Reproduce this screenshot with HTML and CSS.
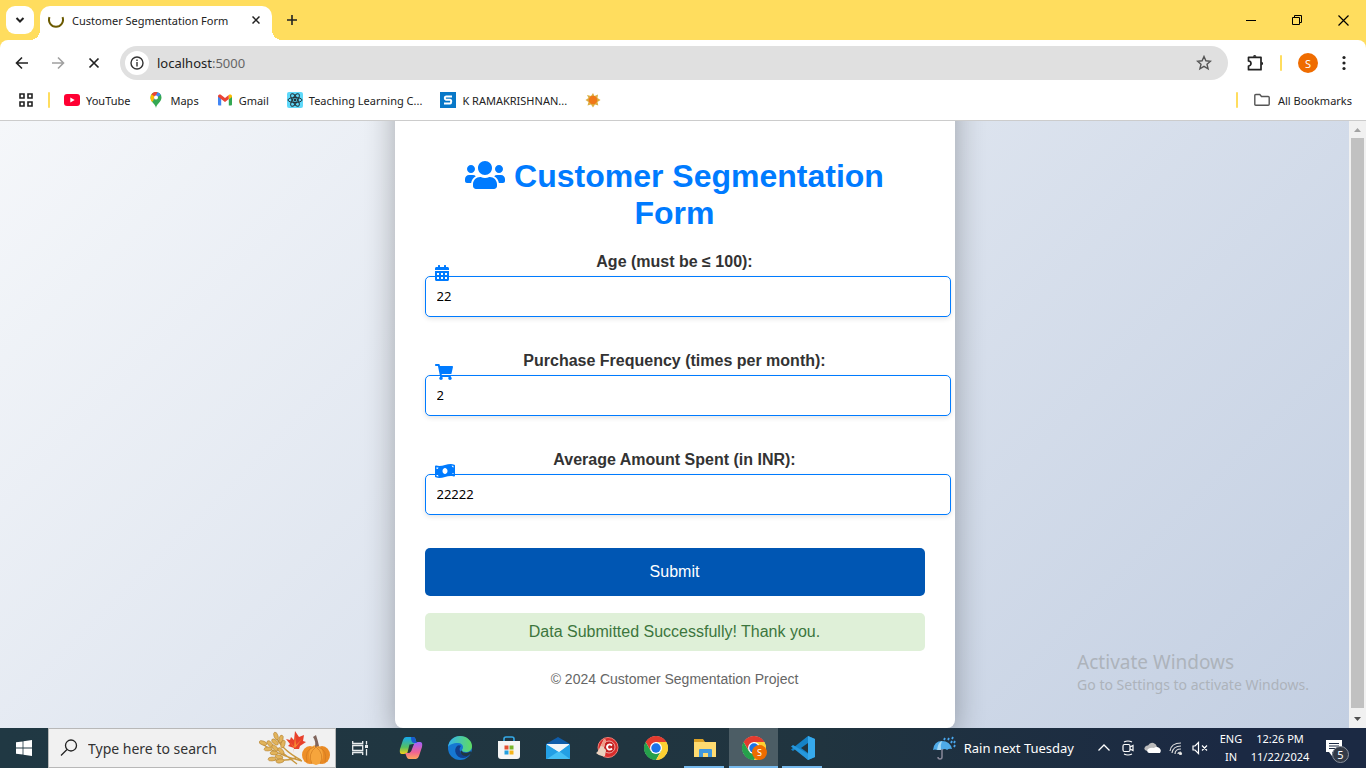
FILE: index.html
```html
<!DOCTYPE html>
<html lang="en">
<head>
<meta charset="utf-8">
<title>Customer Segmentation Form</title>
<link rel="stylesheet" href="styles.css">
</head>
<body>
<svg class="defs" width="0" height="0" aria-hidden="true">
  <symbol id="chrome" viewBox="0 0 48 48">
    <circle cx="24" cy="24" r="23.500" fill="#fff"/>
    <path fill="#e33b2e" d="M24 12h20.800A24 24 0 0 0 3.200 12l10.400 18z"/>
    <path fill="#26a04b" d="M34.400 30L24 48A24 24 0 0 1 3.200 12l10.400 18z"/>
    <path fill="#fdd032" d="M24 12h20.800A24 24 0 0 1 24 48l10.400-18z"/>
    <circle cx="24" cy="24" r="12" fill="#fff"/>
    <circle cx="24" cy="24" r="9.500" fill="#1a73e8"/>
  </symbol>
</svg>
<div class="screen">
  <header class="tabs">
    <button class="tab-search" aria-label="Search tabs"><svg width="10" height="8" viewBox="0 0 10 8" fill="none" stroke="#222" stroke-width="2"><path d="M1.500 2L5 5.500 8.500 2"/></svg></button>
    <div class="tab">
      <svg width="16" height="16" viewBox="0 0 16 16" fill="none" stroke="#6b5a00" stroke-width="2"><path d="M1.500 5.200A7 7 0 1 0 14.500 5.200"/></svg>
      <span class="tab-title">Customer Segmentation Form</span>
      <button class="plain" aria-label="Close tab"><svg width="8" height="8" viewBox="0 0 8 8" stroke="#222" stroke-width="1.500"><path d="M.5.5l7 7M7.500.5l-7 7"/></svg></button>
    </div>
    <button class="plain new-tab" aria-label="New tab"><svg width="10" height="10" viewBox="0 0 10 10" stroke="#222" stroke-width="1.600"><path d="M5 0v10M0 5h10"/></svg></button>
    <div class="window-buttons">
      <button class="plain" aria-label="Minimize"><svg width="10" height="10" viewBox="0 0 10 10" stroke="#000"><path d="M0 5.500h10"/></svg></button>
      <button class="plain" aria-label="Restore"><svg width="10" height="10" viewBox="0 0 10 10" fill="none" stroke="#000"><path d="M.5 2.500h7v7h-7zM2.500 2.500v-2h7v7h-2"/></svg></button>
      <button class="plain" aria-label="Close"><svg width="11" height="11" viewBox="0 0 11 11" stroke="#000" stroke-width="1.200"><path d="M.5.5l10 10M10.500.5l-10 10"/></svg></button>
    </div>
  </header>

  <nav class="toolbar">
    <button class="plain" aria-label="Back"><svg width="14" height="14" viewBox="0 0 14 14" fill="none" stroke="#222" stroke-width="1.600"><path d="M13 7H1.500M7 1.500L1.500 7 7 12.500"/></svg></button>
    <button class="plain" aria-label="Forward"><svg width="14" height="14" viewBox="0 0 14 14" fill="none" stroke="#a0a0a0" stroke-width="1.600"><path d="M1 7h11.500M7 1.500L12.500 7 7 12.500"/></svg></button>
    <button class="plain" aria-label="Stop"><svg width="12" height="12" viewBox="0 0 12 12" stroke="#222" stroke-width="1.700"><path d="M1.500 1.500l9 9M10.500 1.500l-9 9"/></svg></button>
    <div class="omnibox">
      <button class="site-info" aria-label="Site information"><svg width="14" height="14" viewBox="0 0 14 14" fill="none" stroke="#333" stroke-width="1.400"><circle cx="7" cy="7" r="6"/><path d="M7 6v4.500M7 3.500v1.500"/></svg></button>
      <span class="url">localhost<span>:5000</span></span>
      <button class="plain" aria-label="Bookmark"><svg width="16" height="16" viewBox="0 0 16 16" fill="none" stroke="#555" stroke-width="1.400"><path d="M8 1.500l1.900 4.300 4.600.4-3.500 3.100 1.100 4.600L8 11.400l-4.100 2.500L5 9.300 1.500 6.200l4.600-.4z"/></svg></button>
    </div>
    <div class="tools">
      <button class="plain" aria-label="Extensions"><svg width="18" height="18" viewBox="0 0 18 18" fill="none" stroke="#222" stroke-width="1.700" stroke-linejoin="round"><path d="M2.500 3.300H15v12.400H2.500V12a2.500 2.500 0 0 0 0-5z"/><path d="M7 2.800a1.700 1.700 0 0 1 3.400 0zM15.400 7.800a1.700 1.700 0 0 1 0 3.400z" fill="#222" stroke="none"/></svg></button>
      <i class="rule"></i>
      <button class="plain" aria-label="Profile"><span class="avatar">S</span></button>
      <button class="plain menu" aria-label="Menu"><svg width="4" height="16" viewBox="0 0 4 16" fill="#222"><circle cx="2" cy="2.500" r="1.600"/><circle cx="2" cy="8" r="1.600"/><circle cx="2" cy="13.500" r="1.600"/></svg></button>
    </div>
  </nav>

  <nav class="bookmarks">
    <button class="plain" aria-label="Tab groups"><svg width="16" height="16" viewBox="0 0 16 16" fill="none" stroke="#222" stroke-width="1.600"><path d="M2 2h4v4H2zM10 2h4v4h-4zM2 10h4v4H2zM10 10h4v4h-4z"/></svg></button>
    <i class="rule"></i>
    <a href="#" class="mark"><svg width="16" height="16" viewBox="0 0 16 16"><rect y="2" width="16" height="12" rx="3" fill="#f03"/><path d="M6.300 5.500v5L10.700 8z" fill="#fff"/></svg>YouTube</a>
    <a href="#" class="mark"><svg width="16" height="16" viewBox="0 0 16 16"><path d="M8 16c.5-4 5.500-6 5.500-10.500A5.500 5.500 0 0 0 2.500 5.500C2.500 10 7.500 12 8 16z" fill="#34a853"/><path d="M2.500 5.500A5.500 5.500 0 0 1 4 1.800L8 5.500l-4 4.600C3.100 8.700 2.500 7.400 2.500 5.500z" fill="#fbbc04"/><path d="M3.600 2.200L8 5.500 9.600.2a5.500 5.500 0 0 0-6 2z" fill="#ea4335"/><path d="M9.600.2L5 8.500 12.700 2.700A5.500 5.500 0 0 0 9.600.2z" fill="#4285f4"/><circle cx="8" cy="5.500" r="2" fill="#fff"/></svg>Maps</a>
    <a href="#" class="mark"><svg width="16" height="16" viewBox="0 0 16 16"><path d="M1 4v8.500q0 1 1 1h2.200V6z" fill="#4285f4"/><path d="M15 4v8.500q0 1-1 1h-2.200V6z" fill="#34a853"/><path d="M1 4.500C1 2.500 3 2 4.200 3L8 5.900 11.800 3v4L8 10 1 4.800z" fill="#ea4335"/><path d="M11.800 3C13 2 15 2.500 15 4.500v.6l-3.200 2.300z" fill="#fbbc04"/></svg>Gmail</a>
    <a href="#" class="mark"><svg width="16" height="16" viewBox="0 0 16 16"><rect width="16" height="16" rx="2" fill="#5fd9fa"/><g fill="none" stroke="#243238"><ellipse cx="8" cy="8" rx="7" ry="2.600"/><ellipse cx="8" cy="8" rx="7" ry="2.600" transform="rotate(60 8 8)"/><ellipse cx="8" cy="8" rx="7" ry="2.600" transform="rotate(120 8 8)"/></g><circle cx="8" cy="8" r="1.400" fill="#243238"/></svg>Teaching Learning C...</a>
    <a href="#" class="mark"><svg width="16" height="16" viewBox="0 0 16 16"><rect width="16" height="16" fill="#0878c8"/><path d="M12 4.500H6Q4.800 4.500 4.800 6T6 7.800h4q1.200 0 1.200 1.800T10 11.500H4" fill="none" stroke="#fff" stroke-width="2"/></svg>K RAMAKRISHNAN...</a>
    <a href="#" class="mark" aria-label="Sun bookmark"><svg width="16" height="16" viewBox="0 0 16 16"><path d="M8 1l1.500 3L13 2.500 12.500 6 15.500 8 12.500 10l.8 3.500L10 12.500 8 15.500 6 12.500 2.500 13.500 3.500 10 .5 8l3-2L2 3l4 1z" fill="#dcae42"/><circle cx="8" cy="8" r="4.300" fill="#f07818"/></svg></a>
    <div class="all-marks">
      <i class="rule"></i>
      <a href="#" class="mark"><svg width="16" height="14" viewBox="0 0 16 14" fill="none" stroke="#555" stroke-width="1.400"><path d="M.8 2.500q0-1 1-1h4l1.700 2h6.700q1 0 1 1v6.700q0 1-1 1H1.800q-1 0-1-1z"/></svg>All Bookmarks</a>
    </div>
  </nav>

  <div class="viewport">
    <main class="page">
      <section class="card">
        <h1><svg width="40" height="32" viewBox="0 0 640 512" fill="currentColor"><path d="M96 224c35.300 0 64-28.700 64-64s-28.700-64-64-64-64 28.700-64 64 28.700 64 64 64zm448 0c35.300 0 64-28.700 64-64s-28.700-64-64-64-64 28.700-64 64 28.700 64 64 64zm32 32h-64c-17.600 0-33.500 7.100-45.100 18.600 40.300 22.100 68.900 62 75.100 109.400h66c17.700 0 32-14.300 32-32v-32c0-35.300-28.700-64-64-64zm-256 0c61.900 0 112-50.100 112-112S381.900 32 320 32 208 82.100 208 144s50.100 112 112 112zm76.800 32h-8.300c-20.800 10-43.900 16-68.500 16s-47.600-6-68.500-16h-8.300C179.600 288 128 339.600 128 403.200V432c0 26.500 21.500 48 48 48h288c26.500 0 48-21.500 48-48v-28.800c0-63.600-51.600-115.200-115.200-115.200zm-223.700-13.400C161.500 263.100 145.600 256 128 256H64c-35.300 0-64 28.700-64 64v32c0 17.700 14.300 32 32 32h65.900c6.300-47.400 34.900-87.300 75.200-109.400z"/></svg> Customer Segmentation Form</h1>
        <form>
          <div class="field">
            <label for="age">Age (must be ≤ 100):</label>
            <div class="control">
              <svg width="14" height="16" viewBox="0 0 448 512" fill="currentColor"><path fill-rule="evenodd" d="M0 464c0 26.500 21.500 48 48 48h352c26.500 0 48-21.500 48-48V192H0zM64 256h64v64H64zM192 256h64v64h-64zM320 256h64v64h-64zM64 384h64v64H64zM192 384h64v64h-64zM320 384h64v64h-64zM400 64h-48V16c0-8.800-7.200-16-16-16h-32c-8.800 0-16 7.200-16 16v48H160V16c0-8.800-7.200-16-16-16h-32c-8.800 0-16 7.200-16 16v48H48C21.500 64 0 85.500 0 112v48h448v-48c0-26.500-21.500-48-48-48z"/></svg>
              <input id="age" type="text" value="22">
            </div>
          </div>
          <div class="field">
            <label for="frequency">Purchase Frequency (times per month):</label>
            <div class="control">
              <svg width="18" height="16" viewBox="0 0 576 512" fill="currentColor"><path d="M528.120 301.319l47.273-208C578.806 78.301 567.391 64 551.990 64H159.208l-9.166-44.810C147.758 8.021 137.930 0 126.529 0H24C10.745 0 0 10.745 0 24v16c0 13.255 10.745 24 24 24h69.883l70.248 343.435C147.325 417.100 136 435.222 136 456c0 30.928 25.072 56 56 56s56-25.072 56-56c0-15.674-6.447-29.835-16.824-40h209.647C430.447 426.165 424 440.326 424 456c0 30.928 25.072 56 56 56s56-25.072 56-56c0-22.172-12.888-41.332-31.579-50.405l5.517-24.276c3.413-15.018-8.002-29.319-23.403-29.319H218.117l-6.545-32h293.145c11.206 0 20.920-7.754 23.403-18.681z"/></svg>
              <input id="frequency" type="text" value="2">
            </div>
          </div>
          <div class="field">
            <label for="amount">Average Amount Spent (in INR):</label>
            <div class="control">
              <svg width="20" height="16" viewBox="0 0 640 512" fill="currentColor"><path d="M621.160 54.460C582.370 38.190 543.550 32 504.750 32c-123.170-.01-246.330 62.340-369.500 62.340-30.890 0-61.760-3.920-92.650-13.720-3.470-1.100-6.950-1.620-10.350-1.620C15.040 79 0 92.320 0 110.810v317.260c0 12.630 7.230 24.600 18.840 29.460C57.630 473.810 96.450 480 135.250 480c123.170 0 246.340-62.350 369.510-62.350 30.890 0 61.760 3.920 92.650 13.720 3.470 1.100 6.950 1.620 10.350 1.620 17.210 0 32.250-13.320 32.250-31.810V83.930c-.01-12.640-7.240-24.600-18.850-29.470zM48 132.220c20.120 5.040 41.120 7.570 62.720 8.930C104.840 170.540 79 192.690 48 192.690v-60.470zm0 285v-47.780c34.370 0 62.180 27.270 63.710 61.400-22.530-1.810-43.590-6.310-63.710-13.620zM320 352c-44.190 0-80-42.990-80-96 0-53.020 35.820-96 80-96s80 42.980 80 96c0 53.030-35.830 96-80 96zm272 27.780c-17.520-4.390-35.710-6.850-54.320-8.440 5.870-26.080 27.500-45.880 54.320-49.280v57.720zm0-236.110c-30.890-3.910-54.860-29.700-55.810-61.550 19.540 2.170 38.090 6.230 55.810 12.660v48.890z"/></svg>
              <input id="amount" type="text" value="22222">
            </div>
          </div>
          <button class="submit" type="button">Submit</button>
        </form>
        <p class="notice">Data Submitted Successfully! Thank you.</p>
        <footer>© 2024 Customer Segmentation Project</footer>
      </section>
      <aside class="watermark"><strong>Activate Windows</strong><span>Go to Settings to activate Windows.</span></aside>
    </main>
    <div class="scrollbar">
      <svg width="17" height="17" viewBox="0 0 17 17" fill="#a3a3a3"><path d="M5 11h7L8.500 7z"/></svg>
      <i></i>
      <svg width="17" height="17" viewBox="0 0 17 17" fill="#505050"><path d="M5 6h7l-3.500 4z"/></svg>
    </div>
  </div>

  <footer class="taskbar">
    <button class="plain task-wide" aria-label="Start"><svg width="16" height="16" viewBox="0 0 16 16" fill="#fff"><path d="M0 2.300L6.600 1.400v6.200H0zM7.400 1.200L16 0v7.600H7.400zM0 8.400h6.600v6.200L0 13.700zM7.400 8.400H16V16l-8.600-1.200z"/></svg></button>
    <label class="search" for="search">
      <svg width="18" height="18" viewBox="0 0 18 18" fill="none" stroke="#222" stroke-width="1.300"><circle cx="11" cy="6.500" r="5.500"/><path d="M7 10.500L1 16.500"/></svg>
      <input id="search" type="text" value="Type here to search">
      <svg width="72" height="36" viewBox="0 0 72 36">
        <g fill="none" stroke="#c9983f" stroke-width="1.400"><path d="M16 4q5 15 26 26M1 12q14 12 42 19M12 29q12 3 25-1M20 20l18 14"/></g>
        <g fill="#e2b45c" stroke="#ad7a2a" stroke-width=".5"><ellipse cx="17" cy="6" rx="2" ry="4" transform="rotate(-20 17 6)"/><ellipse cx="22" cy="9" rx="2" ry="4" transform="rotate(15 22 9)"/><ellipse cx="16" cy="12" rx="2" ry="4" transform="rotate(-50 16 12)"/><ellipse cx="24" cy="14" rx="2" ry="4" transform="rotate(15 24 14)"/><ellipse cx="4" cy="13" rx="2" ry="4" transform="rotate(-70 4 13)"/><ellipse cx="11" cy="14" rx="2" ry="4" transform="rotate(-40 11 14)"/><ellipse cx="9" cy="19" rx="2" ry="4" transform="rotate(-95 9 19)"/><ellipse cx="16" cy="18" rx="2" ry="4" transform="rotate(-45 16 18)"/><ellipse cx="15" cy="23" rx="2" ry="4" transform="rotate(-90 15 23)"/><ellipse cx="22" cy="21" rx="2" ry="4" transform="rotate(-40 22 21)"/><ellipse cx="13" cy="29" rx="2" ry="4" transform="rotate(-95 13 29)"/><ellipse cx="20" cy="27" rx="2" ry="4" transform="rotate(-75 20 27)"/><ellipse cx="21" cy="31" rx="2" ry="4" transform="rotate(-100 21 31)"/></g>
        <path d="M34 23l1-5-6-2 2-2-4-5 4 1 1-3 3 3 1-9 4 6 5-2-1 6 3 1-6 4-1 3-5 0z" fill="#e8402c"/><path d="M35 18l1-12 1 9 6-6-7 9-5-6z" fill="#f98b32"/>
        <ellipse cx="51" cy="25" rx="8" ry="9" fill="#ee8f28"/><ellipse cx="63" cy="25" rx="8" ry="9" fill="#e98a24"/><ellipse cx="57" cy="25" rx="7" ry="10" fill="#f6a53c"/><g fill="none" stroke="#cf7a20" stroke-width=".7"><path d="M57 17q-9 7-4 17M57 17q9 7 4 17M55 17q-10 3-7 15M59 17q10 3 7 15"/></g><path d="M56 17q1-6-2-10l3-2q2 6 3 11z" fill="#80655c"/>
      </svg>
    </label>
    <button class="plain task-wide" aria-label="Task view"><svg width="16" height="16" viewBox="0 0 16 16" fill="none" stroke="#e8eced" stroke-width="1.300"><path d="M.7 1v2.500h10V1M.7 15v-2.500h10V15M.7 5.500h10v5H.7zM14.500 1v3.500M14.500 9v6.500"/><path d="M13 6.500h3" stroke-width="3"/></svg></button>
    <div class="apps">
      <button class="plain" aria-label="Copilot"><svg width="24" height="24" viewBox="0 0 24 24"><defs><linearGradient id="ca" x2="0" y2="1"><stop stop-color="#16a8ee"/><stop offset=".6" stop-color="#54c060"/><stop offset="1" stop-color="#f5d019"/></linearGradient><linearGradient id="cb" x2="0" y2="1"><stop stop-color="#a060ff"/><stop offset=".6" stop-color="#f06393"/><stop offset="1" stop-color="#ffa65a"/></linearGradient></defs><path d="M7 1h7q2.500 0 3 4l1 3h-4.500Q12 8 11 11l-2 5q-1 2-4 2H3q-3 0-2-5L4 4q1-3 3-3z" fill="url(#ca)"/><path d="M17 23h-7q-2 0-3-4l-1-2h3q3 0 4-4l2-5q1-2 4-2h2q3 0 2 5l-3 9q-1 3-3 3z" fill="url(#cb)"/><path d="M12 1h2q2.500 0 3 4l1 2h-3q-3 0-3-6z" fill="#1859ce"/><path d="M10.500 8.500h3l-3 8h-2z" fill="#20353f"/></svg></button>
      <button class="plain" aria-label="Edge"><svg width="24" height="24" viewBox="0 0 24 24"><defs><linearGradient id="ea"><stop stop-color="#35b4ef"/><stop offset="1" stop-color="#5fdc60"/></linearGradient></defs><circle cx="12" cy="12" r="12" fill="#1678d2"/><path d="M0 11C1 4 6 0 12 0c7 0 12 5 12 10 0 4-3 6-6 6s-4-1-4-2c0-1 1-1 1-3 0-2-2-4-5-4C5 7 1 9 0 11z" fill="url(#ea)"/><path d="M9 10c-4 4-1 12 6 12 3 0 6-2 7-4-4 2-9 1-10-3-1-2 0-4 1-5-1-1-3-1-4 0z" fill="#123f8c"/><path d="M13.500 14.500q1 2.500 5 2.200 2-.2 4-1.500l1.500 2-5.500 3q-6-.5-6-5z" fill="#203743"/></svg></button>
      <button class="plain" aria-label="Store"><svg width="24" height="24" viewBox="0 0 24 24"><path d="M7 7V3q0-2 2-2h6q2 0 2 2v4" fill="none" stroke="#35a9e6" stroke-width="1.600"/><path d="M1 5h22v15q0 3-3 3H4q-3 0-3-3z" fill="#f5f5f5"/><path d="M7.500 9.500h4v4h-4z" fill="#e44f31"/><path d="M12.500 9.500h4v4h-4z" fill="#77b52b"/><path d="M7.500 14.500h4v4h-4z" fill="#229fe0"/><path d="M12.500 14.500h4v4h-4z" fill="#f5b51a"/></svg></button>
      <button class="plain" aria-label="Mail"><svg width="24" height="24" viewBox="0 0 24 24"><path d="M0 8l12-7 12 7v4H0z" fill="#0f5daa"/><path d="M1 8h22v8H1z" fill="#edf4f9"/><path d="M0 8l13 8 11-8v15H0z" fill="#239fe5"/><path d="M1 23l12-8 11 8z" fill="#45bff5"/><path d="M1 8h22l-10 8z" fill="#f1f5f8"/></svg></button>
      <button class="plain" aria-label="CCleaner"><svg width="24" height="24" viewBox="0 0 24 24"><circle cx="13" cy="11.500" r="10" fill="#d92c2b" stroke="#ef7e75"/><circle cx="14" cy="11" r="6" fill="#c4201f" stroke="#f4c9c4" stroke-width=".8"/><path d="M17 9.500q-2-2-4-.5-2 2 0 4 2 1.500 4-.5" fill="none" stroke="#fff" stroke-width="1.800"/><path d="M9 3l2 1-2 8 2 2-1 6q-5 1-9-3 2-1 4-6z" fill="#ead1be"/><path d="M9 3l2 1-2 7-3-1z" fill="#f09a86"/></svg></button>
      <button class="plain" aria-label="Chrome"><svg width="24" height="24"><use href="#chrome"/></svg></button>
      <button class="plain running" aria-label="File Explorer"><svg width="24" height="24" viewBox="0 0 24 24"><path d="M1 3h9l2 3h10v6H1z" fill="#dca125"/><path d="M1 6h22v15H1z" fill="#ffdb70"/><path d="M6 21v-7q0-1 1-1h11q1 0 1 1v7h-4v-4h-5v4z" fill="#4098df"/></svg></button>
      <button class="plain running active" aria-label="Chrome, profile S"><svg width="24" height="24"><use href="#chrome"/></svg><span class="profile-badge">S</span></button>
      <button class="plain running" aria-label="Visual Studio Code"><svg width="24" height="24" viewBox="0 0 24 24"><path d="M17 0l7 3v18l-7 3L5 12.500 2 15 0 13.500 17 0z" fill="#1583c7"/><path d="M17 24L0 10.500 2 9l15 9z" fill="#2698dd"/><path d="M17 0l7 3v18l-7 3z" fill="#36a9ec"/><path d="M17 7v10l-7-5z" fill="#20353f"/></svg></button>
    </div>
    <div class="tray">
      <button class="weather"><svg width="24" height="24" viewBox="0 0 24 24"><path d="M1 14Q2 5 10 5t10 8q-3-1-5 1-2-2-5 0-3-2-5 0-2-1-4 0z" fill="#4eaae8"/><path d="M5 14q1-8 5-9-2 4-1 9z" fill="#a5d9f6"/><path d="M10 13v8q0 2-2 2t-2-2" fill="none" stroke="#889" stroke-width="1.500"/><path d="M13 2l-1 2M17 2l-1 2M21 1l-1 2M20 5l-1 2M23 5l-1 2M23 9l-1 2" stroke="#4aa8ef" stroke-width="1.800"/></svg>Rain next Tuesday</button>
      <button class="plain" aria-label="Show hidden icons"><svg width="12" height="8" viewBox="0 0 12 8" fill="none" stroke="#fff" stroke-width="1.300"><path d="M.5 6.500L6 1l5.500 5.500"/></svg></button>
      <button class="plain" aria-label="Meet now"><svg width="12" height="16" viewBox="0 0 12 16" fill="none" stroke="#fff" stroke-width="1.200"><rect x="1" y="4.500" width="7" height="7" rx="1.500"/><path d="M8 7l3-1.500v5L8 9M2 2q4-2 8 0M2 14q4 2 8 0"/></svg></button>
      <button class="plain" aria-label="OneDrive"><svg width="17" height="12" viewBox="0 0 17 12"><path d="M3 9Q-1 8 1 5q1-2 3-1.500Q6 0 9.500 1q3 1 3.500 4 4 1 3 4z" fill="#bbb"/><path d="M5 11q-3-1-1-4 3-2 6-1 2-2 5 0 3 2 1 5z" fill="#fff"/></svg></button>
      <button class="plain" aria-label="Network"><svg width="14" height="14" viewBox="0 0 14 14" fill="none" stroke="#ddd" stroke-width="1.200"><path d="M1 10Q2 2 12 2M3 12Q4 5 12 5M6 13q0-5 6-5M9 13q0-2 3-2"/><circle cx="11.500" cy="12.500" r="1" fill="#fff"/></svg></button>
      <button class="plain" aria-label="Muted"><svg width="16" height="14" viewBox="0 0 16 14" fill="none" stroke="#fff" stroke-width="1.200"><path d="M1 5h2l3.500-3.500v11L3 9H1zM10 4.500l5 5M15 4.500l-5 5"/></svg></button>
      <button class="stack lang"><span>ENG</span><span>IN</span></button>
      <button class="stack clock"><span>12:26 PM</span><span>11/22/2024</span></button>
      <button class="plain bell" aria-label="Notifications"><svg width="16" height="16" viewBox="0 0 16 16"><path d="M0 0h16v12H6v4l-3-4H0z" fill="#fff"/><path d="M3 3.500h10M3 6h10M3 8.500h10" stroke="#1b2943"/></svg><span class="count">5</span></button>
    </div>
  </footer>
</div>
</body>
</html>
```

FILE: styles.css
```css
* { box-sizing: border-box; }
body { margin: 0; font-family: "Noto Sans", "Open Sans", sans-serif; font-size: 11px; color: #222; }
button { font: inherit; color: inherit; border: 0; padding: 0; background: none; }
a { color: inherit; text-decoration: none; }
svg { flex: none; }
.defs { position: absolute; }
.screen { display: flex; flex-direction: column; height: 100vh; overflow: hidden; background: #ffdd5e; }
.plain { display: flex; align-items: center; justify-content: center; }
.rule { width: 2px; height: 16px; background: #ffdd5e; border-radius: 1px; }

.tabs { display: flex; align-items: center; height: 40px; padding-left: 6px; }
.tab-search { width: 28px; height: 28px; border-radius: 9px; background: #fff; margin-right: 6px; display: flex; align-items: center; justify-content: center; }
.tab { position: relative; display: flex; align-items: center; gap: 8px; width: 232px; height: 34px; align-self: flex-end; padding: 0 12px 6px 8px; background: #fff; border-radius: 10px 10px 0 0; }
.tab::before, .tab::after { content: ""; position: absolute; bottom: 0; width: 10px; height: 10px; }
.tab::before { right: 100%; background: radial-gradient(circle at 0 0, transparent 10px, #fff 10px); }
.tab::after { left: 100%; background: radial-gradient(circle at 100% 0, transparent 10px, #fff 10px); }
.tab-title { flex: 1; white-space: nowrap; }
.new-tab { width: 40px; height: 40px; }
.window-buttons { display: flex; margin-left: auto; }
.window-buttons button { width: 46px; height: 40px; }

.toolbar { display: flex; align-items: center; height: 46px; padding: 0 4px; background: #fff; border-radius: 8px 8px 0 0; }
.toolbar > button { width: 36px; height: 36px; }
.omnibox { flex: 1; display: flex; align-items: center; height: 34px; margin: 0 8px; padding: 0 16px 0 5px; border-radius: 17px; background: #e0e0e0; }
.site-info { width: 24px; height: 24px; border-radius: 50%; background: #fff; display: flex; align-items: center; justify-content: center; }
.url { flex: 1; margin-left: 8px; font-size: 13px; }
.url span { color: #666; }
.tools { display: flex; align-items: center; gap: 16px; padding: 0 16px 0 10px; }
.menu { margin-left: 8px; }
.avatar { display: flex; align-items: center; justify-content: center; width: 20px; height: 20px; border-radius: 50%; background: #ef6c00; color: #fff; }

.bookmarks { display: flex; align-items: center; gap: 14px; height: 35px; padding: 0 14px 6px 18px; background: #fff; border-bottom: 1px solid #ccc; }
.mark { display: flex; align-items: center; gap: 6px; margin-right: 4px; white-space: nowrap; }
.all-marks { display: flex; align-items: center; gap: 16px; margin-left: auto; }
.all-marks .mark { gap: 8px; margin-right: 0; }

.viewport { flex: 1; min-height: 0; display: flex; }
.page { position: relative; flex: 1; display: flex; justify-content: center; overflow: hidden; background: linear-gradient(135deg, #f5f7fa, #c3cfe2); font-family: "Liberation Sans", Arial, sans-serif; font-size: 16px; text-align: center; }
.card { width: 560px; margin-top: -40px; padding: 77px 30px 38px; background: #fff; border-radius: 8px; box-shadow: 0 8px 30px rgba(0, 0, 0, .3); }
h1 { margin: 0 0 21px; font-size: 32px; line-height: 37px; color: #007bff; }
h1 svg { vertical-align: -4px; }
label { color: #333; }
.field { height: 99px; }
.field:last-of-type { height: 97px; }
.field label { display: block; margin-bottom: 5px; font-weight: bold; line-height: 18px; }
.control { position: relative; margin-right: -26px; color: #007bff; }
.control svg { position: absolute; left: 10px; top: -11px; }
.control input { display: block; width: 100%; height: 41px; padding: 0 11px 2px; border: 1px solid #007bff; border-radius: 5px; background: #fff; box-shadow: 0 2px 5px rgba(0, 0, 0, .1); font: 13px "Noto Sans", sans-serif; color: #000; }
.submit { display: block; width: 100%; height: 48px; border-radius: 5px; background: #0056b3; color: #fff; }
.notice { margin: 17px 0 20px; padding: 10px; border-radius: 5px; background: #dff0d8; color: #3c763d; line-height: 18px; }
.card footer { font-size: 14px; line-height: 16px; color: #666; }
.watermark { position: absolute; right: 40px; bottom: 33px; display: flex; flex-direction: column; text-align: left; font-family: "Noto Sans", sans-serif; color: #adb3bb; font-size: 14px; line-height: 20px; }
.watermark strong { font-size: 19px; font-weight: normal; line-height: 26px; }
.scrollbar { display: flex; flex-direction: column; align-items: center; width: 17px; background: #f1f1f1; }
.scrollbar i { flex: 1; width: 13px; margin-bottom: 3px; background: #c1c1c1; }

.taskbar { display: flex; align-items: stretch; height: 40px; background: linear-gradient(90deg, #203843, #20343f 60%, #1b2943 90%); color: #fff; }
.task-wide { width: 48px; }
.search { display: flex; align-items: center; width: 288px; padding: 0 4px 0 11px; border: 1px solid #b8b8b8; background: #f1f1f1; }
.search input { flex: 1; min-width: 0; margin-left: 10px; padding: 0; border: 0; background: none; color: #333; font: 14px "Noto Sans", sans-serif; }
.apps { display: flex; padding-left: 2px; }
.apps button { position: relative; width: 49px; }
.running::after { content: ""; position: absolute; left: 4px; right: 5px; bottom: 0; height: 2px; background: #76b9ed; }
.active { background: #4c5d65; }
.active::after { left: 0; right: 0; }
.profile-badge { position: absolute; left: 23px; top: 17px; width: 15px; height: 15px; border-radius: 50%; background: #ef6c00; font-size: 9px; line-height: 15px; }
.tray { display: flex; align-items: center; margin-left: auto; padding-right: 8px; }
.tray .plain { width: 24px; height: 40px; }
.weather { display: flex; align-items: center; gap: 8px; margin-right: 18px; font-size: 13px; white-space: nowrap; }
.stack { display: flex; flex-direction: column; align-items: center; line-height: 18px; }
.lang { width: 38px; }
.clock { width: 60px; }
.tray .bell { position: relative; width: 48px; }
.count { position: absolute; left: 22px; top: 18px; width: 17px; height: 17px; border: 1px solid #89909c; border-radius: 50%; background: #333a47; line-height: 15px; }
```
